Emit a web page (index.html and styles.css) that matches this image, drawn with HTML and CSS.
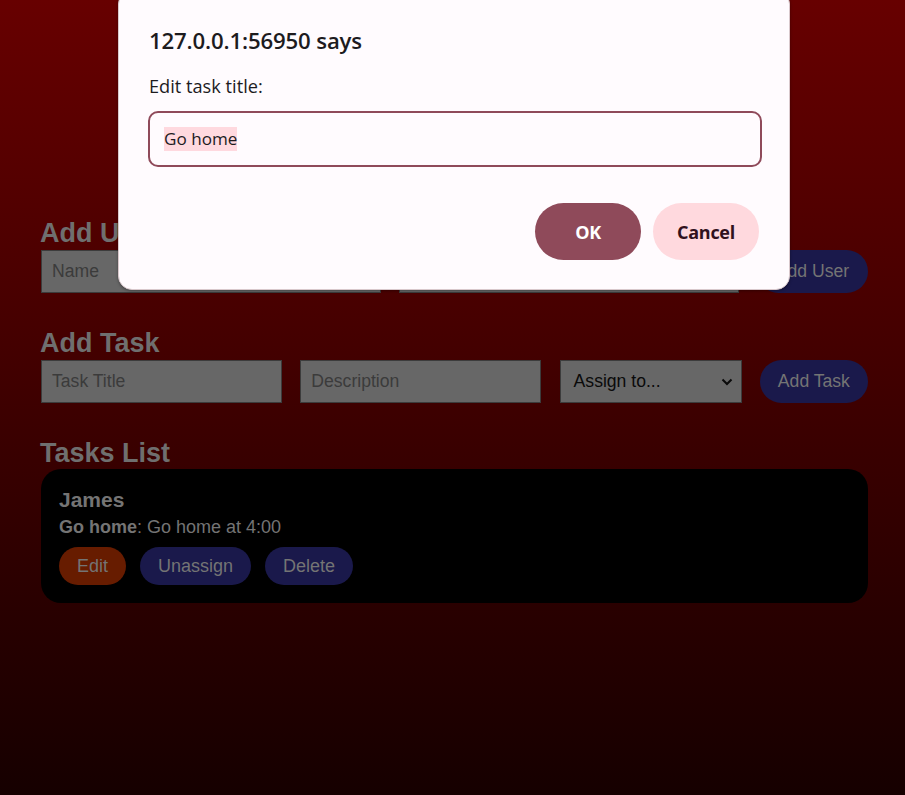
FILE: index.html
```html
<!DOCTYPE html>
<html lang="en">
<head>
<meta charset="utf-8">
<title>Task Manager</title>
<link rel="stylesheet" href="styles.css">
</head>
<body>
<main class="page">
  <section class="section">
    <h2 class="heading">Add User</h2>
    <div class="row row-user">
      <input class="field field-grow" type="text" placeholder="Name">
      <input class="field field-grow" type="text" placeholder="Email">
      <button class="btn btn-navy btn-lg">Add User</button>
    </div>
  </section>
  <section class="section">
    <h2 class="heading">Add Task</h2>
    <div class="row row-task">
      <input class="field field-title" type="text" placeholder="Task Title">
      <input class="field field-desc" type="text" placeholder="Description">
      <div class="select">
        <span class="select-text">Assign to...</span>
        <svg class="chevron" width="12" height="8" viewBox="0 0 12 8"><path d="M1.5 1.5 L6 6 L10.5 1.5" fill="none" stroke="#0a0a0a" stroke-width="2"/></svg>
      </div>
      <button class="btn btn-navy btn-lg">Add Task</button>
    </div>
  </section>
  <section class="section">
    <h2 class="heading">Tasks List</h2>
    <div class="card">
      <h3 class="card-user">James</h3>
      <p class="card-task"><strong>Go home</strong>: Go home at 4:00</p>
      <div class="card-actions">
        <button class="btn btn-orange btn-sm">Edit</button>
        <button class="btn btn-navy btn-sm">Unassign</button>
        <button class="btn btn-navy btn-sm">Delete</button>
      </div>
    </div>
  </section>
</main>

<div class="dialog" role="dialog">
  <div class="dialog-title">127.0.0.1:56950 says</div>
  <div class="dialog-msg">Edit task title:</div>
  <div class="dialog-input"><span class="dialog-sel">Go home</span></div>
  <div class="dialog-actions">
    <button class="dbtn dbtn-ok">OK</button>
    <button class="dbtn dbtn-cancel">Cancel</button>
  </div>
</div>
</body>
</html>
```

FILE: styles.css
```css
html, body {
  margin: 0;
  padding: 0;
}
body {
  min-height: 795px;
  background: linear-gradient(180deg, #670000 0%, #160000 100%);
  font-family: "Liberation Sans", Arial, sans-serif;
  font-size: 18px;
  color: #737373;
  overflow: hidden;
}
.page {
  padding: 218px 37px 0 41px;
}
.section {
  margin-bottom: 35.2px;
}
.heading {
  margin: 0 0 0 -1px;
  font-size: 27px;
  line-height: 31px;
  font-weight: bold;
  color: #6f6f6f;
}
.row {
  display: flex;
  align-items: center;
  gap: 18.3px;
  margin-top: 1px;
}
.field {
  box-sizing: border-box;
  height: 43px;
  margin: 0;
  padding: 0 10px;
  background: #676767;
  border: 1px solid #3c3c3c;
  font-family: "Liberation Sans", Arial, sans-serif;
  font-size: 17.6px;
  color: #111;
  outline: none;
}
.field::placeholder {
  color: #3b3b3b;
}
.field-grow {
  flex: 1 1 0;
  min-width: 0;
}
.field-title, .field-desc {
  width: 241px;
  flex: 0 0 241px;
}
.select {
  box-sizing: border-box;
  flex: 0 0 182px;
  height: 43px;
  display: flex;
  align-items: center;
  justify-content: space-between;
  padding: 0 8px 0 13px;
  background: #676767;
  border: 1px solid #3c3c3c;
  color: #0a0a0a;
  font-size: 17.6px;
}
.chevron {
  display: block;
}
.btn {
  border: none;
  margin: 0;
  font-family: "Liberation Sans", Arial, sans-serif;
  font-size: 17.6px;
  color: #747474;
  white-space: nowrap;
}
.btn-lg {
  height: 43px;
  padding: 0 16px;
  border-radius: 22px;
  flex: 0 0 auto;
}
.btn-sm {
  height: 38px;
  padding: 0 18px;
  border-radius: 19px;
  font-size: 18px;
}
.btn-navy {
  background: #1a194b;
}
.btn-orange {
  background: #671c00;
}
.row-user .btn {
  width: 111px;
}
.row-task .btn {
  width: 108px;
}
.card {
  background: #000;
  border-radius: 20px;
  padding: 19px 18px 18px;
}
.card-user {
  margin: 0;
  font-size: 21px;
  line-height: 24px;
  font-weight: bold;
  color: #747474;
}
.card-task {
  margin: 4.7px 0 0;
  font-size: 18px;
  line-height: 20.7px;
  color: #747474;
}
.card-task strong {
  font-weight: bold;
}
.card-actions {
  display: flex;
  gap: 14px;
  margin-top: 9.6px;
}

/* prompt dialog */
.dialog {
  position: absolute;
  left: 118px;
  top: -10px;
  width: 672px;
  box-sizing: border-box;
  height: 300px;
  padding: 34.5px 30px 29px 30px;
  background: #fffbfe;
  border-radius: 14px;
  border: 1px solid #d9c8cc;
  box-shadow: 0 1px 3px rgba(0,0,0,0.35);
  font-family: "Open Sans", "Noto Sans", sans-serif;
  color: #1d1b1e;
  display: flex;
  flex-direction: column;
}
.dialog-title {
  font-size: 22.2px;
  font-weight: 600;
  line-height: 30px;
  letter-spacing: -0.15px;
}
.dialog-msg {
  margin-top: 18.4px;
  font-size: 18.2px;
  line-height: 24px;
}
.dialog-input {
  box-sizing: border-box;
  margin-top: 13.5px;
  margin-left: -1px;
  width: 614px;
  height: 56px;
  border: 2.7px solid #8f4a5a;
  border-radius: 10px;
  padding: 0 0 0 14px;
  display: flex;
  align-items: center;
}
.dialog-sel {
  background: #ffd9df;
  font-size: 17.1px;
  line-height: 24px;
  color: #1d1b1e;
}
.dialog-actions {
  margin-top: auto;
  display: flex;
  justify-content: flex-end;
  gap: 12px;
}
.dbtn {
  width: 106px;
  height: 57px;
  border: none;
  border-radius: 29px;
  font-family: "Open Sans", "Noto Sans", sans-serif;
  font-size: 18px;
  font-weight: 700;
  letter-spacing: -0.3px;
}
.dbtn-ok {
  background: #8f4a5a;
  color: #fff;
}
.dbtn-cancel {
  background: #ffd9de;
  color: #31111d;
}
```
